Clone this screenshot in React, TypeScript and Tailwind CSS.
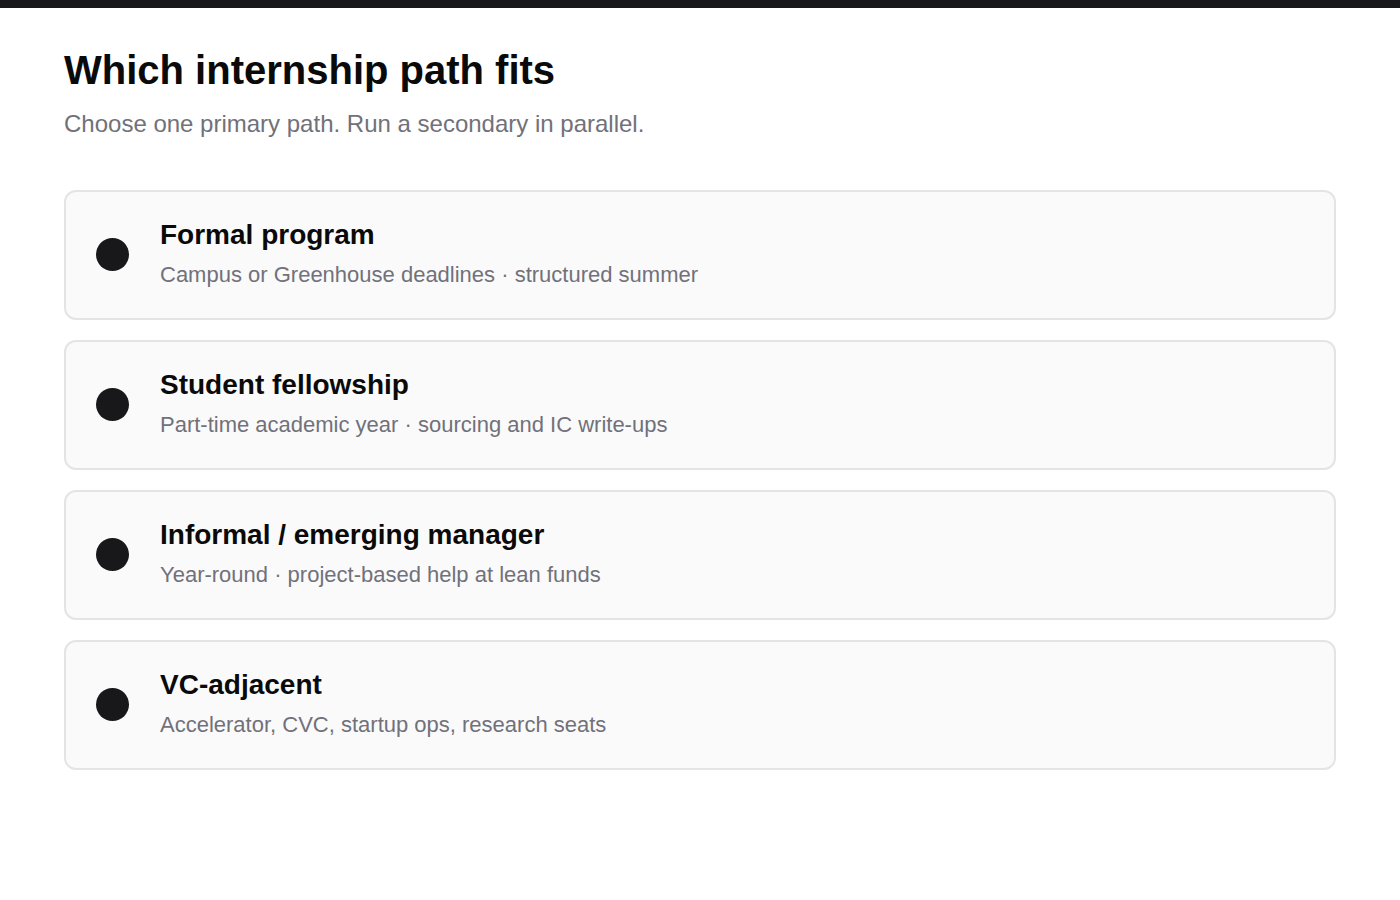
const paths = [
  {
    title: "Formal program",
    desc: "Campus or Greenhouse deadlines · structured summer",
  },
  {
    title: "Student fellowship",
    desc: "Part-time academic year · sourcing and IC write-ups",
  },
  {
    title: "Informal / emerging manager",
    desc: "Year-round · project-based help at lean funds",
  },
  {
    title: "VC-adjacent",
    desc: "Accelerator, CVC, startup ops, research seats",
  },
];

export default function App() {
  return (
    <div className="min-h-screen bg-white font-['Liberation_Sans',Arial,sans-serif]">
      {/* TOP BAR */}
      <div className="h-2 bg-[#18181b]" />

      <div className="px-16 pt-[38px]">
        <h1 className="text-[40px] leading-[1.2] font-bold text-[#0a0a0a]">
          Which internship path fits
        </h1>
        <p className="mt-[13px] text-[24px] leading-[1.4] text-[#71717a]">
          Choose one primary path. Run a secondary in parallel.
        </p>

        {/* PATH OPTIONS */}
        <div className="mt-[49px] flex flex-col gap-5">
          {paths.map((p) => (
            <div
              key={p.title}
              className="flex items-center gap-[31px] rounded-xl border-2 border-[#e4e4e7] bg-[#fafafa] px-[30px] pt-[25px] pb-[27px]"
            >
              <div className="mt-[2px] h-[33px] w-[33px] shrink-0 rounded-full bg-[#18181b]" />
              <div>
                <div className="text-[28px] leading-[1.25] font-bold text-[#0a0a0a]">
                  {p.title}
                </div>
                <div className="mt-[6px] text-[22px] leading-[1.5] text-[#71717a]">
                  {p.desc}
                </div>
              </div>
            </div>
          ))}
        </div>
      </div>
    </div>
  );
}
